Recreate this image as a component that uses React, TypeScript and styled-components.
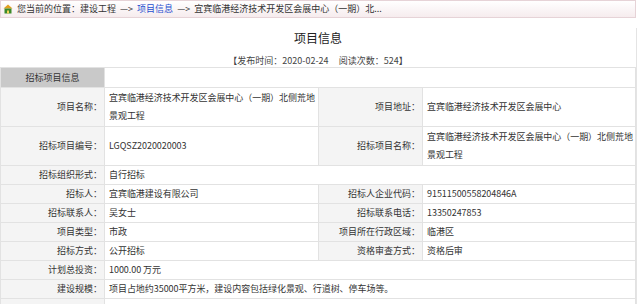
import React from "react";
import styled, {createGlobalStyle} from "styled-components";

const GlobalStyle = createGlobalStyle`
  body {
    margin: 0;
    background: #fff;
    font-family: "Noto Sans CJK SC", "Noto Sans", sans-serif;
    color: #333;
  }
`;

type Row = {
  label: string;
  value: string;
  label2?: string;
  value2?: string;
  tall?: boolean;
};

const rows: Row[] = [
  {
    label: "项目名称：",
    value: "宜宾临港经济技术开发区会展中心（一期）北侧荒地景观工程",
    label2: "项目地址：",
    value2: "宜宾临港经济技术开发区会展中心",
    tall: true,
  },
  {
    label: "招标项目编号：",
    value: "LGQSZ2020020003",
    label2: "招标项目名称：",
    value2: "宜宾临港经济技术开发区会展中心（一期）北侧荒地景观工程",
    tall: true,
  },
  {label: "招标组织形式：", value: "自行招标"},
  {label: "招标人：", value: "宜宾临港建设有限公司", label2: "招标人企业代码：", value2: "91511500558204846A"},
  {label: "招标联系人：", value: "吴女士", label2: "招标联系电话：", value2: "13350247853"},
  {label: "项目类型：", value: "市政", label2: "项目所在行政区域：", value2: "临港区"},
  {label: "招标方式：", value: "公开招标", label2: "资格审查方式：", value2: "资格后审"},
  {label: "计划总投资：", value: "1000.00 万元"},
  {label: "建设规模：", value: "项目占地约35000平方米，建设内容包括绿化景观、行道树、停车场等。"},
];

function HomeIcon() {
  return (
    <svg width="10" height="10" viewBox="0 0 10 10">
      <path d="M5 0.5 L9.5 4.5 L0.5 4.5 Z" fill="#e0a020" />
      <rect x="1.5" y="4.5" width="7" height="5" fill="#3d8a2a" />
      <rect x="4" y="6.5" width="2" height="3" fill="#f2d35a" />
    </svg>
  );
}

export default function App() {
  return (
    <>
      <GlobalStyle />
      <Page>
        <Crumbs>
          <HomeIcon />
          <CrumbText>
            您当前的位置：建设工程&nbsp; —&gt;&nbsp; <CrumbLink>项目信息</CrumbLink>&nbsp; —&gt;&nbsp;
            宜宾临港经济技术开发区会展中心（一期）北...
          </CrumbText>
        </Crumbs>
        <Panel>
          <Title>项目信息</Title>
          <Meta>【发布时间：2020-02-24&nbsp;&nbsp;&nbsp;&nbsp;&nbsp;阅读次数：524】</Meta>
          <InfoTable>
            <colgroup>
              <col style={{width: 104}} />
              <col style={{width: 214}} />
              <col style={{width: 104}} />
              <col />
            </colgroup>
            <tbody>
              <tr>
                <SectionHead>招标项目信息</SectionHead>
                <Value colSpan={3} />
              </tr>
              {rows.map((r) => (
                <tr key={r.label}>
                  <Label>{r.label}</Label>
                  {r.label2 ? (
                    <>
                      <Value $tall={r.tall}>{r.value}</Value>
                      <Label>{r.label2}</Label>
                      <Value $tall={r.tall}>{r.value2}</Value>
                    </>
                  ) : (
                    <Value colSpan={3}>{r.value}</Value>
                  )}
                </tr>
              ))}
              <tr>
                <Label />
                <Value colSpan={3} />
              </tr>
            </tbody>
          </InfoTable>
        </Panel>
      </Page>
    </>
  );
}

const Page = styled.div`
  width: 637px;
`;

const Crumbs = styled.div`
  width: 632px;
  height: 16px;
  display: flex;
  align-items: center;
  gap: 4px;
  padding-left: 2px;
  border: 1px solid #e6d3d7;
  background: linear-gradient(#ffffff, #f6ecee);
`;

const CrumbText = styled.span`
  font-size: 9px;
  line-height: 16px;
  white-space: nowrap;
  color: #333;
`;

const CrumbLink = styled.span`
  color: #1f4fd0;
`;

const Panel = styled.div`
  border-right: 1px solid #e4e4e4;
`;

const Title = styled.div`
  margin-top: 10px;
  height: 20px;
  line-height: 20px;
  text-align: center;
  font-size: 12px;
  color: #222;
`;

const Meta = styled.div`
  margin-top: 7px;
  height: 12px;
  line-height: 12px;
  text-align: center;
  font-size: 9px;
  color: #444;
`;

const InfoTable = styled.table`
  width: 636px;
  table-layout: fixed;
  border-collapse: collapse;
  font-size: 9px;
  color: #333;

  td,
  th {
    border: 1px solid #e2e2e2;
    height: 18px;
    line-height: 18px;
    font-weight: normal;
    vertical-align: middle;
    padding-top: 0;
    padding-bottom: 0;
  }
`;

const SectionHead = styled.th`
  background: #c9c9c9;
  text-align: center;
  color: #333;
  padding: 0;
  && {
    height: 19px;
  }
`;

const Label = styled.th`
  background: #f4f4f4;
  text-align: right;
  padding: 0 2px 0 0;
  white-space: nowrap;
`;

const Value = styled.td<{$tall?: boolean}>`
  background: #fff;
  text-align: left;
  padding: 0 0 0 4px;
  letter-spacing: -0.05px;
  && {
    padding-top: ${(p) => (p.$tall ? "1px" : "0")};
    padding-bottom: ${(p) => (p.$tall ? "1px" : "0")};
  }
`;
